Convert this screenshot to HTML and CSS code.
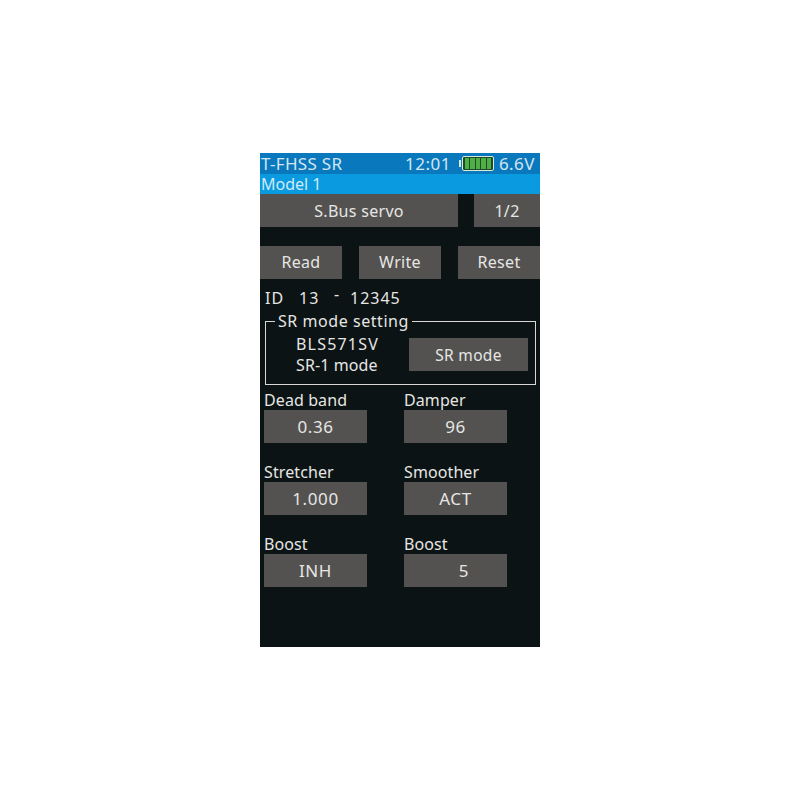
FILE: index.html
```html
<!doctype html>
<html>
<head>
  <meta name="viewport" content="width=device-width, initial-scale=1.0"/>
  <title>T-FHSS SR</title>
  <link rel="stylesheet" href="styles.css">
</head>
<body>
  <div id="screen">
    <div class="status">
      <span class="status-title">T-FHSS SR</span>
      <span class="status-time">12:01</span>
      <span class="battery">
        <span class="cell"></span><span class="cell"></span><span class="cell"></span><span class="cell"></span><span class="cell"></span>
      </span>
      <span class="status-volt">6.6V</span>
    </div>
    <div class="model">Model 1</div>

    <div class="row-title">
      <div class="btn btn-title">S.Bus servo</div>
      <div class="btn btn-page">1/2</div>
    </div>

    <div class="row-actions">
      <div class="btn">Read</div>
      <div class="btn">Write</div>
      <div class="btn">Reset</div>
    </div>

    <div class="id-line"><span>ID</span><span>13</span><span class="id-dash">-</span><span>12345</span></div>

    <fieldset class="sr-box">
      <legend>SR mode setting</legend>
      <div class="sr-text"><div class="sr-model">BLS571SV</div><div>SR-1 mode</div></div>
      <div class="btn btn-sr">SR mode</div>
    </fieldset>

    <div class="params">
      <div class="param"><div class="label">Dead band</div><div class="btn btn-val">0.36</div></div>
      <div class="param"><div class="label">Damper</div><div class="btn btn-val">96</div></div>
      <div class="param"><div class="label">Stretcher</div><div class="btn btn-val">1.000</div></div>
      <div class="param"><div class="label">Smoother</div><div class="btn btn-val">ACT</div></div>
      <div class="param"><div class="label">Boost</div><div class="btn btn-val">INH</div></div>
      <div class="param"><div class="label">Boost</div><div class="btn btn-val btn-num">5</div></div>
    </div>
  </div>
</body>
</html>
```

FILE: styles.css
```css
* {
  margin: 0;
  padding: 0;
  box-sizing: border-box;
}
body {
  background: #fff;
  font-family: "Noto Sans", "Open Sans", sans-serif;
  font-size: 16px;
  color: #e6e6e4;
}
#screen {
  width: 280px;
  height: 494px;
  margin: 153px 0 0 260px;
  background: #0c1314;
  overflow: hidden;
}
.status {
  height: 21px;
  background: #0a78bd;
  display: flex;
  align-items: center;
  color: #d3e6f2;
  font-size: 17px;
  line-height: 21px;
  padding-left: 1px;
}
.status-title {
  width: 144px;
  letter-spacing: 0.3px;
}
.status-time {
  width: 57px;
  letter-spacing: 0.5px;
}
.battery {
  width: 32px;
  height: 15px;
  border: 1px solid #d8ead8;
  border-radius: 2px;
  background: #1c4a2a;
  display: flex;
  gap: 1px;
  padding: 1px 2px;
  margin-right: 5px;
  position: relative;
}
.battery::before {
  content: "";
  position: absolute;
  left: -4px;
  top: 3px;
  width: 2px;
  height: 7px;
  background: #d8ead8;
}
.cell {
  flex: 1;
  background: #4fae44;
}
.status-volt {
  letter-spacing: 0.4px;
}
.model {
  height: 20px;
  background: #0a9adf;
  color: #cfeaf7;
  line-height: 20px;
  padding-left: 1px;
}
.btn {
  background: #545250;
  color: #e6e6e4;
  display: flex;
  align-items: center;
  justify-content: center;
  height: 33px;
  letter-spacing: 0.3px;
}
.row-title {
  display: flex;
  justify-content: space-between;
}
.btn-title {
  width: 198px;
}
.btn-page {
  width: 66px;
}
.row-actions {
  display: flex;
  justify-content: space-between;
  margin-top: 19px;
  line-height: 20px;
}
.row-actions .btn {
  width: 82px;
  padding-bottom: 2px;
}
.id-line {
  display: flex;
  margin-top: 8px;
  padding-left: 5px;
  height: 22px;
  line-height: 22px;
  letter-spacing: 1px;
}
.id-line span:nth-child(1) {
  width: 34px;
}
.id-line span:nth-child(2) {
  width: 35px;
}
.id-dash {
  width: 16px;
  margin-top: -4px;
}
.sr-box {
  width: 270px;
  height: 72px;
  margin: 4px 0 0 5px;
  border: 1px solid #d8d8d6;
  display: flex;
  align-items: flex-start;
  padding: 0 7px 0 6px;
}
.sr-box legend {
  margin-left: 3px;
  padding: 0 3px;
  line-height: 16px;
  letter-spacing: 0.55px;
}
.sr-text {
  width: 113px;
  margin-left: 24px;
  margin-top: 5px;
  line-height: 21px;
  letter-spacing: 0.1px;
}
.sr-model {
  letter-spacing: 1.2px;
}
.btn-sr {
  width: 119px;
  margin-top: 9px;
  font-size: 15.5px;
}
.params {
  display: grid;
  grid-template-columns: 103px 103px;
  column-gap: 37px;
  row-gap: 17px;
  margin: 3px 0 0 4px;
}
.label {
  height: 22px;
  line-height: 22px;
  margin-top: 1px;
  margin-bottom: -1px;
  letter-spacing: 0.1px;
}
.btn-val {
  font-size: 17px;
  letter-spacing: 0.6px;
}
.btn-num {
  padding-left: 17px;
}
```
